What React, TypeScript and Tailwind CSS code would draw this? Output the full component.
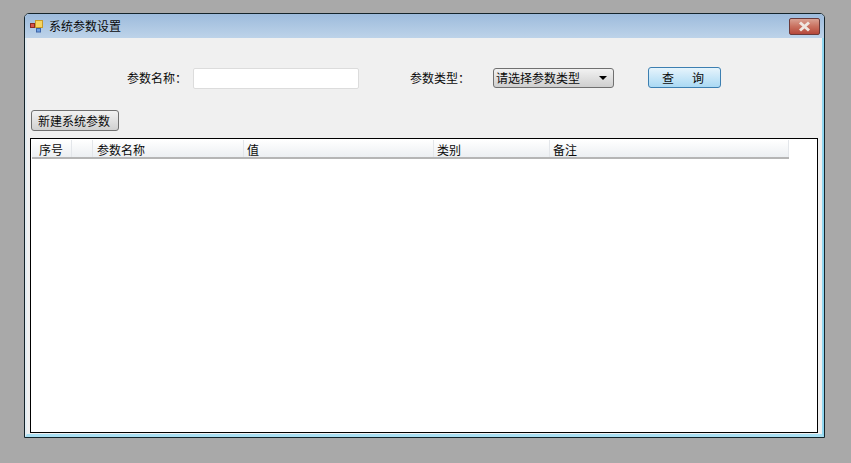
import React from "react"

const font = { fontFamily: '"Noto Sans CJK SC", "Liberation Sans", sans-serif' }

const columns = [
    { label: "序号", width: "w-[40px]", pad: "pl-[7px]" },
    { label: "", width: "w-[21px]", pad: "" },
    { label: "参数名称", width: "w-[151px]", pad: "pl-[4px]" },
    { label: "值", width: "w-[190px]", pad: "pl-[3px]" },
    { label: "类别", width: "w-[116px]", pad: "pl-[3px]" },
    { label: "备注", width: "w-[239px]", pad: "pl-[3px]" },
]

const AppIcon = () => (
    <svg width="14" height="14" viewBox="0 0 14 14">
        <rect x="0.5" y="4.5" width="4" height="4" fill="#d9534a" stroke="#8a2a22" />
        <rect x="5.5" y="1.5" width="7" height="7" fill="#f7d560" stroke="#c79a2a" />
        <rect x="6.5" y="9.5" width="4" height="3.5" fill="#6f9fe0" stroke="#3c64a8" />
    </svg>
)

export default function App() {
    return (
        <div style={font} className="w-[851px] h-[463px] bg-[#a9a9a9] pt-[13px] pl-[24px] overflow-hidden text-[12px] text-[#0a0a0a]">
            <div className="w-[801px] h-[425px] flex flex-col rounded-t-[5px] border border-[#14242a] bg-[#f0f0f0] overflow-hidden">
                {/* title bar */}
                <div className="h-[24px] shrink-0 flex justify-between pl-[5px] pr-[4px] bg-gradient-to-b from-[#9dbbdc] to-[#bdd3e9]">
                    <div className="flex items-center gap-[5px]">
                        <AppIcon />
                        <span className="leading-none">系统参数设置</span>
                    </div>
                    <div className="mt-[4px] w-[31px] h-[17px] rounded-[2px] border border-[#6b3a3a] bg-gradient-to-b from-[#d9a193] via-[#c9705f] to-[#b5473a] flex items-center justify-center">
                        <svg width="15" height="11" viewBox="0 0 15 11">
                            <path d="M3 1.5 L12 9.5 M12 1.5 L3 9.5" stroke="#efe6e0" strokeWidth="3" />
                        </svg>
                    </div>
                </div>

                {/* client area */}
                <div className="flex-1 flex flex-col pl-[3px] pr-[4px] pb-[1px] border-l-2 border-r-2 border-b-[3px] border-l-[#e3edf3] border-r-[#8fd6f0] border-b-[#a9dff2]">
                    <div className="h-[51px] shrink-0 flex items-end">
                        <span className="ml-[97px] mb-[1px] w-[66px] h-[21px] leading-[21px]">参数名称：</span>
                        <div className="w-[166px] h-[21px] bg-white border border-[#dcdcdc] rounded-[2px]" />
                        <span className="ml-[51px] mb-[1px] w-[83px] h-[21px] leading-[21px]">参数类型：</span>
                        <div className="mb-[1px] w-[121px] h-[20px] flex items-center justify-between pl-[2px] pr-[6px] rounded-[3px] border border-[#707070] bg-gradient-to-b from-[#f2f2f2] to-[#cfcfcf]">
                            <span className="leading-none">请选择参数类型</span>
                            <span className="w-0 h-0 border-x-[4px] border-x-transparent border-t-[4px] border-t-black" />
                        </div>
                        <div className="ml-[34px] mb-[1px] w-[73px] h-[21px] flex items-center justify-center gap-[18px] pr-[3px] rounded-[3px] border border-[#3c7fb1] bg-gradient-to-b from-[#e6f4fc] to-[#aad9f3]">
                            <span className="leading-none">查</span>
                            <span className="leading-none">询</span>
                        </div>
                    </div>

                    <div className="mt-[21px] shrink-0">
                        <div className="ml-[1px] w-[88px] h-[21px] flex items-center justify-center pr-[2px] rounded-[3px] border border-[#707070] bg-gradient-to-b from-[#f2f2f2] to-[#d0d0d0]">
                            <span className="leading-none">新建系统参数</span>
                        </div>
                    </div>

                    {/* grid */}
                    <div className="mt-[7px] flex-1 bg-white border border-black pl-[1px] pt-[1px]">
                        <div className="flex w-[757px] h-[19px] border-b-2 border-[#b5b5b5] bg-gradient-to-b from-white to-[#eceff2]">
                            {columns.map((c, i) => (
                                <div key={i} className={`${c.width} ${c.pad} h-full leading-[19px] border-r border-[#e3e6ea]`}>
                                    {c.label}
                                </div>
                            ))}
                        </div>
                    </div>
                </div>
            </div>
        </div>
    )
}
